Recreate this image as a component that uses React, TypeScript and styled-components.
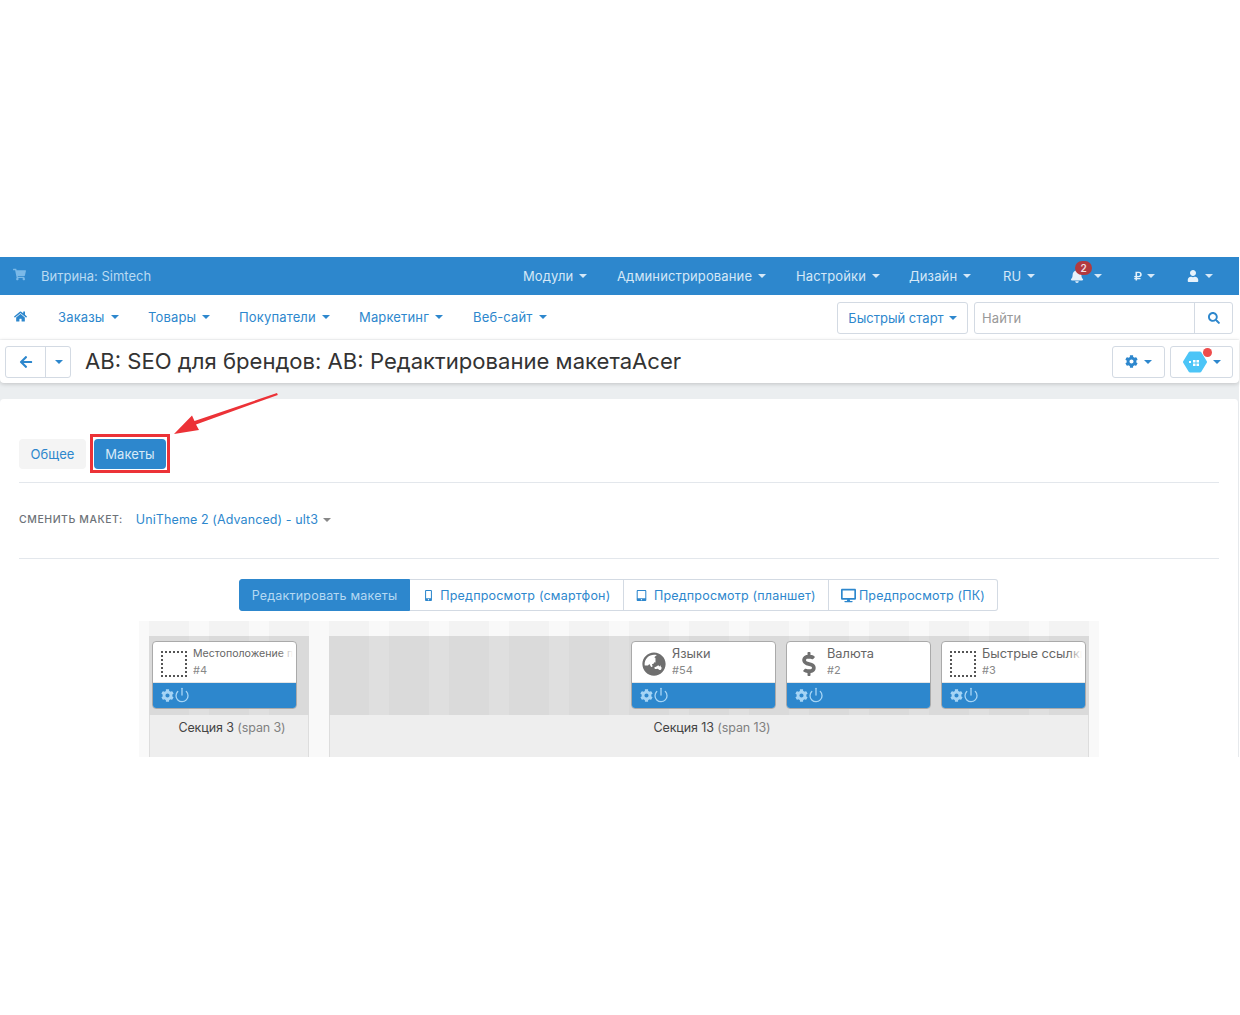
import React from "react";
import styled, { createGlobalStyle } from "styled-components";
import {
  FaShoppingCart, FaHome, FaArrowLeft, FaBell, FaUser, FaCog, FaSearch,
  FaDollarSign, FaGlobeAsia, FaRubleSign, FaMobileAlt, FaTabletAlt, FaDesktop,
} from "react-icons/fa";
import { Power } from "lucide-react";

const Global = createGlobalStyle`
  html, body { margin: 0; padding: 0; background: #fff; }
  body { font-family: Inter, "Liberation Sans", sans-serif; }
  * { box-sizing: border-box; }
`;

const BLUE = "#2d87cd";
const LINK = "#2d87cd";
const LINE = "#d3dae3";

const Page = styled.div`
  position: relative;
  width: 1240px;
  height: 1015px;
  padding-top: 257px;
`;
const Admin = styled.div`
  width: 1239px;
  background: #ebeef0;
`;
const TopBar = styled.div`
  height: 38px;
  background: ${BLUE};
  display: flex;
  align-items: center;
  padding: 0 0 0 13px;
  color: #d5e8f7;
  font-size: 13px;
  letter-spacing: 0.13px;
`;
const Store = styled.div`
  display: flex;
  align-items: center;
  gap: 15px;
  margin-right: auto;
  color: #b9daf2;
  letter-spacing: 0;
  svg { color: #7ab9e8; width: 13px; height: 13px; margin-top: -3px; }
`;
const TopItem = styled.div<{ $w: number; $gap?: number }>`
  display: flex;
  align-items: center;
  gap: ${(p) => p.$gap ?? 5}px;
  width: ${(p) => p.$w}px;
  white-space: nowrap;
  position: relative;
  svg { color: #e6f2fb; }
`;
const Caret = styled.span<{ $c?: string }>`
  display: inline-block;
  width: 0;
  height: 0;
  border-left: 4px solid transparent;
  border-right: 4px solid transparent;
  border-top: 4px solid ${(p) => p.$c || "currentColor"};
  margin-left: 1px;
`;
const Badge = styled.span`
  position: absolute;
  left: 5px;
  top: -8px;
  width: 17px;
  height: 14px;
  border-radius: 7px;
  background: #b23a3f;
  color: #f3dfe0;
  font-size: 10px;
  font-weight: 600;
  line-height: 14px;
  text-align: center;
  letter-spacing: 0;
`;
const Nav = styled.div`
  height: 45px;
  background: #fff;
  display: flex;
  align-items: center;
  padding: 0 6px 0 14px;
  font-size: 13px;
  letter-spacing: 0.15px;
  color: ${LINK};
  border-bottom: 1px solid #f6f7f8;
`;
const NavItem = styled.div<{ $w: number }>`
  display: flex;
  align-items: center;
  gap: 5px;
  width: ${(p) => p.$w}px;
  margin-top: -1px;
  svg { width: 13px; height: 13px; }
`;
const QuickStart = styled.div`
  margin-left: auto;
  margin-top: 2px;
  width: 131px;
  height: 32px;
  border: 1px solid ${LINE};
  border-radius: 3px;
  display: flex;
  align-items: center;
  justify-content: center;
  gap: 4px;
  margin-right: 6px;
  letter-spacing: 0;
`;
const Search = styled.div`
  width: 259px;
  height: 32px;
  margin-top: 2px;
  border: 1px solid ${LINE};
  border-radius: 3px;
  display: flex;
  align-items: center;
  color: #999;
  padding-left: 7px;
`;
const SearchText = styled.span`
  flex: 1;
`;
const SearchBtn = styled.span`
  width: 38px;
  height: 30px;
  border-left: 1px solid ${LINE};
  display: flex;
  align-items: center;
  justify-content: center;
  color: ${LINK};
  svg { width: 12px; height: 12px; }
`;
const TitleBar = styled.div`
  height: 43px;
  background: #fff;
  display: flex;
  align-items: center;
  padding: 0 6px 0 5px;
  border-radius: 0 0 4px 4px;
  box-shadow: 0 1px 4px rgba(0, 0, 0, 0.18);
  position: relative;
`;
const BackGroup = styled.div`
  display: flex;
  height: 32px;
  border: 1px solid ${LINE};
  border-radius: 3px;
  margin-right: 14px;
  color: ${LINK};
`;
const BackBtn = styled.span`
  width: 40px;
  display: flex;
  align-items: center;
  justify-content: center;
  border-right: 1px solid ${LINE};
  svg { width: 14px; height: 14px; }
`;
const BackCaret = styled.span`
  width: 24px;
  display: flex;
  align-items: center;
  justify-content: center;
`;
const Title = styled.h1`
  margin: -2px auto 0 0;
  font-size: 22.1px;
  font-weight: 400;
  color: #333;
  white-space: nowrap;
`;
const ToolBtn = styled.div<{ $w: number }>`
  width: ${(p) => p.$w}px;
  height: 32px;
  border: 1px solid ${LINE};
  border-radius: 3px;
  margin-left: 5px;
  display: flex;
  align-items: center;
  justify-content: center;
  gap: 5px;
  color: ${LINK};
  position: relative;
  svg { flex: none; }
`;
const RedDot = styled.span`
  position: absolute;
  left: 32px;
  top: 1px;
  width: 9px;
  height: 9px;
  border-radius: 50%;
  background: #ee4c4c;
`;
const Gap = styled.div`
  height: 16px;
`;
const Card = styled.div`
  height: 358px;
  background: #fff;
  border-radius: 4px 4px 0 0;
  border-right: 1px solid #e6e9ec;
  padding: 0 19px;
`;
const Tabs = styled.div`
  height: 84px;
  padding-top: 40px;
  display: flex;
  gap: 8px;
  border-bottom: 1px solid #e3e7ec;
  font-size: 13px;
  letter-spacing: 0.05px;
`;
const Tab = styled.div<{ $on?: boolean; $w: number }>`
  position: relative;
  width: ${(p) => p.$w}px;
  height: 30px;
  border-radius: 4px;
  display: flex;
  align-items: center;
  justify-content: center;
  background: ${(p) => (p.$on ? BLUE : "#f4f4f4")};
  color: ${(p) => (p.$on ? "#d8eaf8" : LINK)};
  &::after {
    content: "";
    display: ${(p) => (p.$on ? "block" : "none")};
    position: absolute;
    inset: -5px -4px -4px;
    border: 3px solid #ec3237;
  }
`;
const LayoutRow = styled.div`
  height: 76px;
  padding-top: 28px;
  display: flex;
  align-items: flex-start;
  gap: 13px;
  border-bottom: 1px solid #e3e7ec;
`;
const LayoutLabel = styled.span`
  font-size: 10.5px;
  font-weight: 500;
  color: #6d7278;
  letter-spacing: 0.55px;
  line-height: 18px;
`;
const LayoutValue = styled.span`
  font-size: 12.5px;
  color: ${LINK};
  line-height: 18px;
  letter-spacing: 0.1px;
  display: flex;
  align-items: center;
  gap: 4px;
`;
const Switcher = styled.div`
  display: flex;
  justify-content: center;
  margin: 20px 0 10px -1px;
  font-size: 12.5px;
  letter-spacing: 0.2px;
`;
const SwitchBtn = styled.div<{ $on?: boolean; $w: number }>`
  width: ${(p) => p.$w}px;
  height: 32px;
  display: flex;
  align-items: center;
  justify-content: center;
  gap: 3px;
  white-space: nowrap;
  background: ${(p) => (p.$on ? BLUE : "#fff")};
  color: ${(p) => (p.$on ? "#b5d9f3" : LINK)};
  border: 1px solid ${(p) => (p.$on ? BLUE : LINE)};
  border-left-width: ${(p) => (p.$on ? "1px" : "0")};
  &:first-child { border-radius: 3px 0 0 3px; }
  &:last-child { border-radius: 0 3px 3px 0; }
`;
const Grid = styled.div`
  width: 960px;
  height: 136px;
  margin-left: 120px;
  padding: 15px 10px 0;
  display: flex;
  gap: 20px;
  overflow: hidden;
  background-color: #f9f9f9;
  background-image: repeating-linear-gradient(
    to right,
    #f3f3f3 0,
    #f3f3f3 40px,
    #f9f9f9 40px,
    #f9f9f9 60px
  );
  background-position: 10px 0;
`;
const Section = styled.div<{ $w: number }>`
  width: ${(p) => p.$w}px;
  flex: none;
`;
const SectionHead = styled.div<{ $end?: boolean }>`
  height: 79px;
  background: rgba(0, 0, 0, 0.1);
  display: flex;
  gap: 10px;
  padding: 5px 3px 0;
  justify-content: ${(p) => (p.$end ? "flex-end" : "flex-start")};
`;
const SectionBody = styled.div`
  height: 51px;
  background: #eee;
  border: 1px solid #ddd;
  border-width: 0 1px;
  text-align: center;
  font-size: 12.5px;
  line-height: 16px;
  padding: 5px 0 0 6px;
  color: #444;
  letter-spacing: -0.1px;
`;
const Muted = styled.span`
  color: #808080;
`;
const Block = styled.div`
  width: 145px;
  height: 68px;
  border: 1px solid #aaa;
  border-radius: 4px;
  overflow: hidden;
  background: #fff;
  display: flex;
  flex-direction: column;
`;
const BlockTop = styled.div`
  height: 41px;
  flex: none;
  display: flex;
  align-items: flex-start;
  border-bottom: 1px solid #e5e5e5;
`;
const BlockIcon = styled.div`
  width: 40px;
  height: 40px;
  flex: none;
  display: flex;
  align-items: center;
  justify-content: center;
  color: #6f6f6f;
  padding: 3px 0 0 2px;
  svg { margin-left: 2px; }
`;
const Dotted = styled.span`
  width: 26px;
  height: 26px;
  border: 2px dotted #555;
`;
const BlockText = styled.div`
  min-width: 0;
  flex: 1;
  overflow: hidden;
  position: relative;
  padding-top: 4px;
  margin-right: 3px;
  &::after {
    content: "";
    position: absolute;
    right: 0;
    top: 0;
    bottom: 0;
    width: 14px;
    background: linear-gradient(to right, rgba(255, 255, 255, 0), #fff);
  }
`;
const BlockName = styled.div<{ $small?: boolean }>`
  font-size: ${(p) => (p.$small ? "10.6px" : "12.8px")};
  line-height: 16px;
  color: #666;
  white-space: nowrap;
`;
const BlockId = styled.div`
  font-size: 11px;
  line-height: 16px;
  color: #888;
`;
const BlockBar = styled.div`
  flex: 1;
  background: ${BLUE};
  display: flex;
  align-items: center;
  gap: 0;
  padding: 0 0 1px 8px;
  color: #a5d4f5;
`;
const Annotation = styled.svg`
  position: absolute;
  left: 170px;
  top: 390px;
`;

const Bar = () => (
  <BlockBar>
    <FaCog size={13} />
    <Power size={16} strokeWidth={2} />
  </BlockBar>
);

const BlockCard = ({ icon, name, id, small }: { icon: React.ReactNode; name: string; id: string; small?: boolean }) => (
  <Block>
    <BlockTop>
      <BlockIcon>{icon}</BlockIcon>
      <BlockText>
        <BlockName $small={small}>{name}</BlockName>
        <BlockId>{id}</BlockId>
      </BlockText>
    </BlockTop>
    <Bar />
  </Block>
);

export default function App() {
  return (
    <Page>
      <Global />
      <Admin>
        <TopBar>
          <Store>
            <FaShoppingCart />
            <span>Витрина: Simtech</span>
          </Store>
          <TopItem $w={94}>Модули <Caret /></TopItem>
          <TopItem $w={179}>Администрирование <Caret /></TopItem>
          <TopItem $w={113}>Настройки <Caret /></TopItem>
          <TopItem $w={94}>Дизайн <Caret /></TopItem>
          <TopItem $w={67}>RU <Caret /></TopItem>
          <TopItem $w={63} $gap={9}>
            <FaBell size={14} />
            <Badge>2</Badge>
            <Caret />
          </TopItem>
          <TopItem $w={54} $gap={3}><FaRubleSign size={10} /><Caret /></TopItem>
          <TopItem $w={52}><FaUser size={12} /><Caret /></TopItem>
        </TopBar>
        <Nav>
          <NavItem $w={44}><FaHome /></NavItem>
          <NavItem $w={90}>Заказы <Caret /></NavItem>
          <NavItem $w={91}>Товары <Caret /></NavItem>
          <NavItem $w={120}>Покупатели <Caret /></NavItem>
          <NavItem $w={114}>Маркетинг <Caret /></NavItem>
          <NavItem $w={100}>Веб-сайт <Caret /></NavItem>
          <QuickStart>Быстрый старт <Caret /></QuickStart>
          <Search>
            <SearchText>Найти</SearchText>
            <SearchBtn><FaSearch /></SearchBtn>
          </Search>
        </Nav>
        <TitleBar>
          <BackGroup>
            <BackBtn><FaArrowLeft /></BackBtn>
            <BackCaret><Caret /></BackCaret>
          </BackGroup>
          <Title>АВ: SEO для брендов: АВ: Редактирование макетаAcer</Title>
          <ToolBtn $w={53}><FaCog size={13} /><Caret /></ToolBtn>
          <ToolBtn $w={63}>
            <svg width="24" height="22" viewBox="0 0 24 22">
              <polygon
                points="7,2 17,2 22.5,11 17,20 7,20 1.5,11"
                fill="#4cc5f7"
                stroke="#4cc5f7"
                strokeWidth="3"
                strokeLinejoin="round"
              />
              <g fill="#fff">
                <rect x="6" y="10" width="2" height="2" />
                <rect x="10" y="9" width="2.5" height="2.5" />
                <rect x="13.5" y="9" width="2.5" height="2.5" />
                <rect x="10" y="12.5" width="2.5" height="2.5" />
                <rect x="13.5" y="12.5" width="2.5" height="2.5" />
              </g>
            </svg>
            <Caret />
            <RedDot />
          </ToolBtn>
        </TitleBar>
        <Gap />
        <Card>
          <Tabs>
            <Tab $w={67}>Общее</Tab>
            <Tab $on $w={72}>Макеты</Tab>
          </Tabs>
          <LayoutRow>
            <LayoutLabel>СМЕНИТЬ МАКЕТ:</LayoutLabel>
            <LayoutValue>UniTheme 2 (Advanced) - ult3 <Caret $c="#888" /></LayoutValue>
          </LayoutRow>
          <Switcher>
            <SwitchBtn $on $w={171}>Редактировать макеты</SwitchBtn>
            <SwitchBtn $w={214}><FaMobileAlt size={11} />&nbsp;Предпросмотр (смартфон)</SwitchBtn>
            <SwitchBtn $w={205}><FaTabletAlt size={11} />&nbsp;Предпросмотр (планшет)</SwitchBtn>
            <SwitchBtn $w={169}><FaDesktop size={15} />Предпросмотр (ПК)</SwitchBtn>
          </Switcher>
          <Grid>
            <Section $w={160}>
              <SectionHead>
                <BlockCard icon={<Dotted />} name="Местоположение покупателя" id="#4" small />
              </SectionHead>
              <SectionBody>Секция 3 <Muted>(span 3)</Muted></SectionBody>
            </Section>
            <Section $w={760}>
              <SectionHead $end>
                <BlockCard icon={<FaGlobeAsia size={24} />} name="Языки" id="#54" />
                <BlockCard icon={<FaDollarSign size={24} />} name="Валюта" id="#2" />
                <BlockCard icon={<Dotted />} name="Быстрые ссылки" id="#3" />
              </SectionHead>
              <SectionBody>Секция 13 <Muted>(span 13)</Muted></SectionBody>
            </Section>
          </Grid>
        </Card>
      </Admin>
      <Annotation width="112" height="50" viewBox="0 0 112 50">
        <polygon points="107,3 107.8,5 26,34.5 29,40 4,44 22,25.5 24.5,31" fill="#ec3237" />
      </Annotation>
    </Page>
  );
}
